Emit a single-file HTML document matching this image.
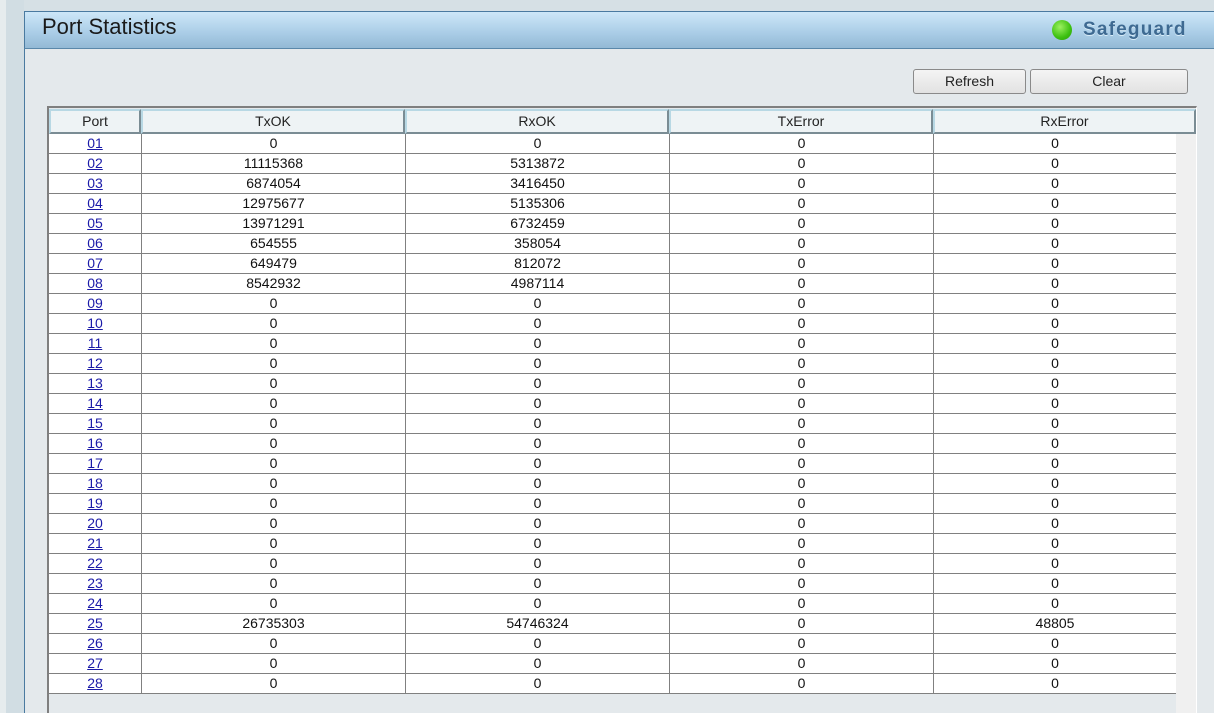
<!DOCTYPE html>
<html><head><meta charset="utf-8"><style>
*{margin:0;padding:0;box-sizing:border-box}
body{width:1214px;height:713px;overflow:hidden;background:#e4e9ec;font-family:"Liberation Sans",Arial,sans-serif;position:relative}
.a{position:absolute}
.hc{position:absolute;top:109px;height:25px;background:#eef3f5;border-top:2px solid #b8d8e4;border-left:2px solid #b8d8e4;border-right:2px solid #7a8c94;border-bottom:2px solid #7a8c94;font-size:14px;color:#222;text-align:center;line-height:20px}
.row{position:absolute;left:49px;width:1127px;height:20px;border-bottom:1px solid #808080;background:#fff;font-size:14px;color:#111;line-height:19px}
.row span{position:absolute;top:0;text-align:center;height:19px}
.row span+span{border-left:1px solid #808080}
.row a{color:#1a1aa8;text-decoration:underline}
.btn{position:absolute;top:69px;height:25px;background:linear-gradient(#f4f4f4,#e2e2e2);border:1px solid #8a8a8a;border-radius:3px;font-size:14px;color:#222;text-align:center;line-height:23px}
</style></head><body>
<div class="a" style="left:0;top:0;width:6px;height:713px;background:#e6ecee"></div>
<div class="a" style="left:6px;top:0;width:18px;height:713px;background:#d1dde3"></div>
<div class="a" style="left:24px;top:0;width:1190px;height:11px;background:#d6e0e5"></div>
<div class="a" style="left:24px;top:11px;width:1174px;height:702px;background:#e4e9ec;border-left:1px solid #4a7aa0"></div>
<div class="a" style="left:24px;top:11px;width:1190px;height:38px;background:linear-gradient(#cde7f8,#a9cce6 60%,#93b9d5);border-top:1px solid #4a7aa0;border-bottom:1px solid #5a88aa;border-left:1px solid #4a7aa0"></div>
<div class="a" style="left:42px;top:14px;font-size:22px;color:#1a1a1a">Port Statistics</div>
<div class="a" style="left:1052px;top:20px;width:20px;height:20px;border-radius:50%;background:radial-gradient(circle at 40% 35%,#9cf060,#3cc010 60%,#2a9a08)"></div>
<div class="a" style="left:1083px;top:19px;font-size:19px;font-weight:bold;color:#3e6a92;letter-spacing:1.2px;text-shadow:0 1px 0 #d8ecf8">Safeguard</div>
<div class="btn" style="left:913px;width:113px">Refresh</div>
<div class="btn" style="left:1030px;width:158px">Clear</div>
<div class="a" style="left:47px;top:106px;width:1150px;height:607px;border-top:2px solid #7f7f7f;border-left:2px solid #7f7f7f;border-right:1px solid #fff;background:#e4e9ec"></div>
<div class="a" style="left:1176px;top:134px;width:20px;height:579px;background:#f0f0f0"></div>
<div class="hc" style="left:49px;width:92px">Port</div>
<div class="hc" style="left:141px;width:264px">TxOK</div>
<div class="hc" style="left:405px;width:264px">RxOK</div>
<div class="hc" style="left:669px;width:264px">TxError</div>
<div class="hc" style="left:933px;width:263px">RxError</div>
<div id="rows"></div>
<script>
var d=[["01",0,0,0,0],["02",11115368,5313872,0,0],["03",6874054,3416450,0,0],["04",12975677,5135306,0,0],["05",13971291,6732459,0,0],["06",654555,358054,0,0],["07",649479,812072,0,0],["08",8542932,4987114,0,0]];
for(var i=9;i<=28;i++){var p=(i<10?"0":"")+i;d.push(i==25?[p,26735303,54746324,0,48805]:[p,0,0,0,0]);}
var h="";
for(var i=0;i<d.length;i++){var r=d[i];h+='<div class="row" style="top:'+(134+i*20)+'px"><span style="left:0;width:92px"><a>'+r[0]+'</a></span><span style="left:92px;width:264px">'+r[1]+'</span><span style="left:356px;width:264px">'+r[2]+'</span><span style="left:620px;width:264px">'+r[3]+'</span><span style="left:884px;width:243px">'+r[4]+'</span></div>';}
document.getElementById("rows").innerHTML=h;
</script>
</body></html>
